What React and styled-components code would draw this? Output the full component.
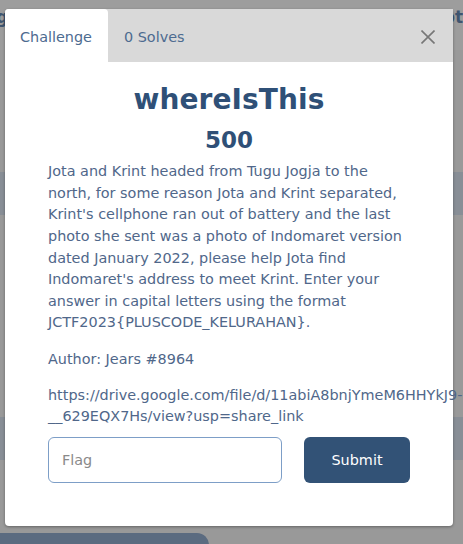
import React from "react";
import styled, { createGlobalStyle } from "styled-components";

const Global = createGlobalStyle`
  html, body { margin: 0; padding: 0; }
  body { font-family: "DejaVu Sans", "Liberation Sans", sans-serif; background: #9b9b9b; }
  * { box-sizing: border-box; }
`;

const Page = styled.div`
  position: relative;
  width: 463px;
  height: 544px;
  overflow: hidden;
  background: #999999;
  display: flex;
  flex-direction: column;
`;

const BgHeader = styled.div`
  height: 50px;
  flex: none;
  background: #9d9d9d;
  display: flex;
  justify-content: space-between;
  align-items: flex-start;
  padding-top: 7px;
  font-weight: bold;
  font-size: 17px;
  color: #3f5570;
  overflow: hidden;
`;

const BgText = styled.span`
  margin: ${(p) => p.$m};
  white-space: nowrap;
`;

const Spacer = styled.div`
  height: ${(p) => p.$h}px;
  flex: none;
`;

const Band = styled.div`
  height: 43px;
  flex: none;
  background: #888e96;
`;

const BgButton = styled.div`
  width: 209px;
  height: 40px;
  flex: none;
  background: #5b6b80;
  border-top-right-radius: 12px;
`;

const Modal = styled.div`
  position: absolute;
  left: 5px;
  top: 9px;
  width: 448px;
  height: 517px;
  background: #ffffff;
  border-radius: 4px;
  box-shadow: 0 1px 3px rgba(0, 0, 0, 0.35);
  display: flex;
  flex-direction: column;
`;

const TabBar = styled.div`
  height: 53px;
  background: #d9d9d9;
  display: flex;
  align-items: stretch;
  border-radius: 4px 0 0 0;
`;

const Tab = styled.div`
  display: flex;
  align-items: center;
  padding: 2px ${(p) => (p.$active ? "15px" : "16px")} 0;
  background: ${(p) => (p.$active ? "#ffffff" : "transparent")};
  border-radius: 4px 4px 0 0;
  font-size: 14.4px;
  color: #4d6b90;
  width: ${(p) => (p.$active ? "103px" : "auto")};
`;

const Close = styled.button`
  margin-left: auto;
  margin-right: 18px;
  align-self: center;
  border: none;
  background: none;
  padding: 0;
  width: 14px;
  height: 14px;
  display: flex;
  cursor: pointer;
  margin-top: 2px;
`;

const Body = styled.div`
  padding: 21px 43px 0;
  display: flex;
  flex-direction: column;
  color: #50678a;
`;

const Title = styled.h3`
  margin: 0;
  text-align: center;
  font-size: 28px;
  line-height: 1.2;
  font-weight: bold;
  color: #2f5077;
  letter-spacing: 0.1px;
`;

const Value = styled.h4`
  margin: 10px 0 0;
  text-align: center;
  font-size: 23px;
  line-height: 1.2;
  font-weight: bold;
  color: #2f5077;
`;

const Para = styled.p`
  margin: ${(p) => p.$mt || 0}px 0 0;
  font-size: 14.4px;
  line-height: 21.6px;
`;

const Form = styled.form`
  margin-top: 9px;
  display: grid;
  grid-template-columns: 234px 106px;
  column-gap: 22px;
`;

const Input = styled.input`
  height: 46px;
  border: 1px solid #7d9ec7;
  border-radius: 6px;
  padding: 0 13px;
  font-family: inherit;
  font-size: 14.4px;
  color: #333;
  outline: none;
  &::placeholder { color: #8a8a8a; }
`;

const Submit = styled.button`
  height: 46px;
  border: none;
  border-radius: 6px;
  background: #325276;
  color: #ffffff;
  font-family: inherit;
  font-size: 14.4px;
  cursor: pointer;
`;

const description =
  "Jota and Krint headed from Tugu Jogja to the north, for some reason Jota and Krint separated, Krint's cellphone ran out of battery and the last photo she sent was a photo of Indomaret version dated January 2022, please help Jota find Indomaret's address to meet Krint. Enter your answer in capital letters using the format JCTF2023{PLUSCODE_KELURAHAN}.";

export default function App() {
  return (
    <>
      <Global />
      <Page>
        <BgHeader>
          <BgText $m="0 0 0 -16px">ng</BgText>
          <BgText $m="0 -6px 0 0">Noti</BgText>
        </BgHeader>
        <Spacer $h={122} />
        <Band />
        <Spacer $h={202} />
        <Band />
        <Spacer $h={73} />
        <BgButton />
        <Modal>
          <TabBar>
            <Tab $active>Challenge</Tab>
            <Tab>0 Solves</Tab>
            <Close aria-label="Close">
              <svg width="14" height="14" viewBox="0 0 14 14">
                <path d="M0.5 0.5 L13.5 13.5 M13.5 0.5 L0.5 13.5" stroke="#777" strokeWidth="1.6" fill="none" />
              </svg>
            </Close>
          </TabBar>
          <Body>
            <Title>whereIsThis</Title>
            <Value>500</Value>
            <Para $mt={7}>{description}</Para>
            <Para $mt={15}>Author: Jears #8964</Para>
            <Para $mt={14}>https://drive.google.com/file/d/11abiA8bnjYmeM6HHYkJ9-__629EQX7Hs/view?usp=share_link</Para>
            <Form onSubmit={(e) => e.preventDefault()}>
              <Input placeholder="Flag" />
              <Submit type="submit">Submit</Submit>
            </Form>
          </Body>
        </Modal>
      </Page>
    </>
  );
}
